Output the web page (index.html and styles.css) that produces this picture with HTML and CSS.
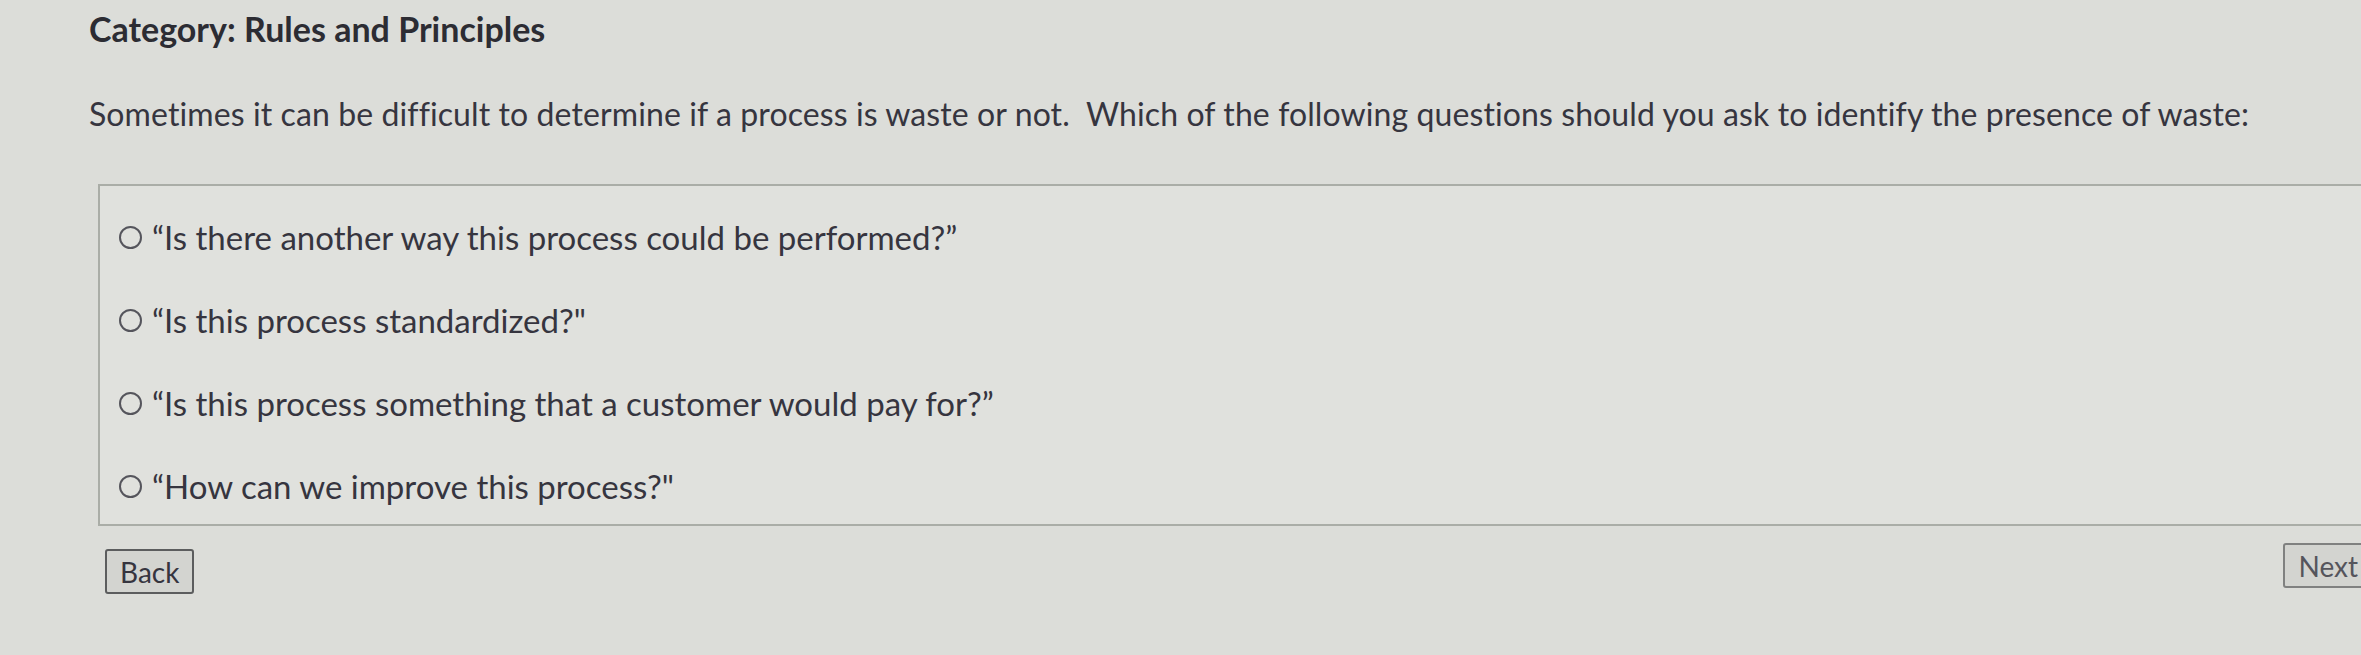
FILE: index.html
```html
<!DOCTYPE html>
<html lang="en">
<head>
    <meta charset="UTF-8">
    <title>Quiz</title>
    <link rel="stylesheet" href="styles.css">
</head>
<body>
    <main class="pagina">
        <h1 class="categoria">Category: Rules and Principles</h1>
        <p class="pergunta">Sometimes it can be difficult to determine if a process is waste or not.&nbsp; Which of the following questions should you ask to identify the presence of waste:</p>

        <div class="opcoes">
            <label class="opcao"><span class="radio"></span>“Is there another way this process could be performed?”</label>
            <label class="opcao"><span class="radio"></span>“Is this process standardized?"</label>
            <label class="opcao"><span class="radio"></span>“Is this process something that a customer would pay for?”</label>
            <label class="opcao"><span class="radio"></span>“How can we improve this process?"</label>
        </div>

        <div class="botoes">
            <button class="botao">Back</button>
            <button class="botao proximo">Next</button>
        </div>
    </main>
</body>
</html>
```

FILE: styles.css
```css
* {
    padding: 0;
    margin: 0;
    box-sizing: border-box;
}

body {
    background-color: #dcddd9;
    color: #36353f;
    font-family: Lato, 'Noto Sans', sans-serif;
    overflow: hidden;
}

.pagina {
    padding-left: 89px;
    padding-top: 9px;
}

.categoria {
    font-size: 34px;
    font-weight: bold;
    line-height: 40px;
    color: #2c2c33;
}

.pergunta {
    font-size: 32px;
    line-height: 40px;
    margin-top: 45px;
    letter-spacing: 0.1px;
    white-space: nowrap;
}

.opcoes {
    margin-top: 50px;
    margin-left: 9px;
    width: 2400px;
    height: 342px;
    border: 2px solid #aaada7;
    background-color: #e0e1dd;
    padding-top: 31px;
    padding-left: 19px;
    display: flex;
    flex-direction: column;
    gap: 43px;
}

.opcao {
    display: flex;
    align-items: center;
    font-size: 33px;
    line-height: 40px;
}

.radio {
    width: 23px;
    height: 23px;
    border: 2px solid #55555c;
    border-radius: 50%;
    margin-right: 10px;
    flex-shrink: 0;
}

.botoes {
    display: flex;
    justify-content: space-between;
    align-items: flex-start;
    margin-top: 23px;
    margin-left: 16px;
}

.botao {
    font-family: Lato, 'Noto Sans', sans-serif;
    font-size: 28px;
    color: #36353f;
    background-color: #d3d4d0;
    border: 2px solid #5c5d5e;
    border-radius: 3px;
    height: 45px;
    padding: 0 13px;
}

.proximo {
    margin-top: -6px;
    margin-right: -12px;
    color: #55555c;
    border-color: #808180;
}
```
